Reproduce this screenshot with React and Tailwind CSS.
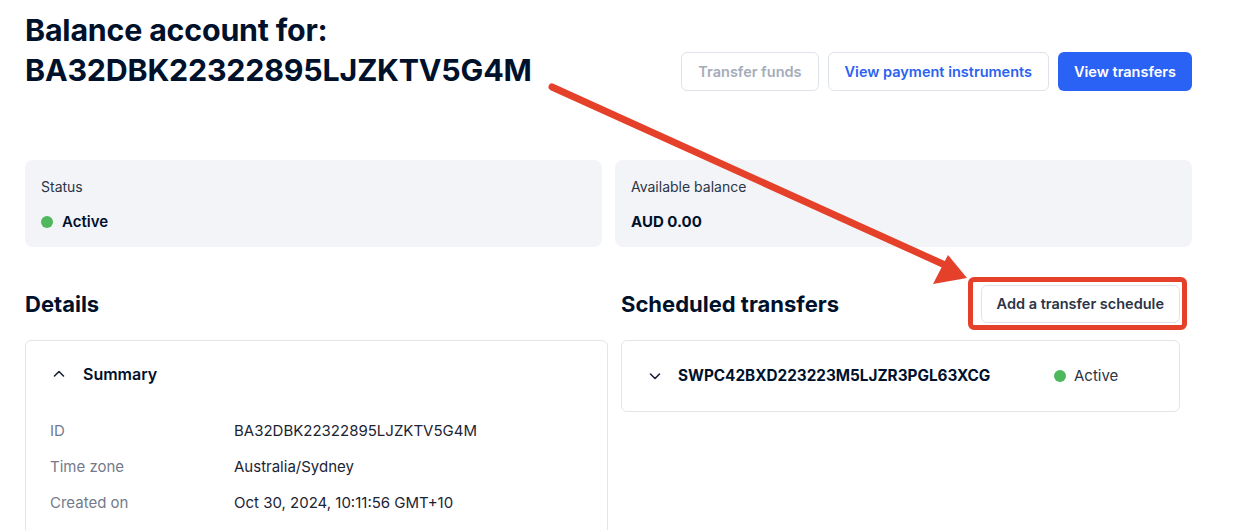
import React from 'react';

function Dot() {
  return <span className="inline-block w-3 h-3 rounded-full bg-[#4fb85c]" />;
}

function Chevron({ up }) {
  return (
    <svg className="w-4 h-4 text-[#1a2236]" viewBox="0 0 16 16" fill="none" stroke="currentColor" strokeWidth={1.6} strokeLinecap="round" strokeLinejoin="round">
      {up ? <path d="M3.5 10l4.5-4.5 4.5 4.5" /> : <path d="M3.5 6l4.5 4.5 4.5-4.5" />}
    </svg>
  );
}

export default function App() {
  const rows = [
    ['ID', 'BA32DBK22322895LJZKTV5G4M'],
    ['Time zone', 'Australia/Sydney'],
    ['Created on', 'Oct 30, 2024, 10:11:56 GMT+10'],
  ];

  return (
    <div className="relative w-[1244px] h-[530px] overflow-hidden bg-white font-['Inter',sans-serif] text-[#00112c]">
      <div className="pl-[25px] pr-[52px] pt-[10px]">
        {/* Header */}
        <div className="flex justify-between">
          <h1 className="text-[30.4px] leading-[40px] font-bold tracking-[-0.2px]">
            Balance account for:
            <br />
            BA32DBK22322895LJZKTV5G4M
          </h1>
          <div className="flex gap-[9px] mt-[42px] h-[39px]">
            <button className="px-4 rounded-md border border-[#dfe2e8] text-[14.5px] font-semibold text-[#a5acba]">Transfer funds</button>
            <button className="px-4 rounded-md border border-[#dfe2e8] text-[14.5px] font-semibold text-[#2b62f0]">View payment instruments</button>
            <button className="px-4 rounded-md bg-[#2b62f6] text-[14.5px] font-semibold text-white">View transfers</button>
          </div>
        </div>

        {/* Summary cards */}
        <div className="grid grid-cols-2 gap-[13px] mt-[69px]">
          <div className="h-[87px] rounded-lg bg-[#f3f4f8] px-4 pt-[16px]">
            <div className="text-[14px] text-[#2b3446]">Status</div>
            <div className="flex items-center gap-[9px] mt-[14px] text-[15px] font-semibold">
              <Dot />
              Active
            </div>
          </div>
          <div className="h-[87px] rounded-lg bg-[#f3f4f8] px-4 pt-[16px]">
            <div className="text-[14px] text-[#2b3446]">Available balance</div>
            <div className="mt-[14px] text-[15px] font-bold">AUD 0.00</div>
          </div>
        </div>

        {/* Lower section */}
        <div className="flex gap-[13px] mt-[38px]">
          <div className="w-[583px]">
            <h2 className="h-[38px] flex items-center text-[22px] font-bold">Details</h2>
            <div className="mt-[17px] border border-[#e3e5ea] rounded-md h-[200px]">
              <div className="flex items-center gap-[16px] pl-[25px] pt-[21px] text-[16px] font-semibold">
                <Chevron up />
                Summary
              </div>
              <div className="mt-[35px] pl-[24px] flex flex-col gap-[16px] text-[15px]">
                {rows.map(([k, v]) => (
                  <div key={k} className="flex h-[20px] items-center">
                    <span className="w-[184px] text-[#737b8b]">{k}</span>
                    <span className="text-[#1c2434]">{v}</span>
                  </div>
                ))}
              </div>
            </div>
          </div>
          <div className="flex-1">
            <div className="flex items-center justify-between h-[38px]">
              <h2 className="text-[22px] font-bold">Scheduled transfers</h2>
              <button className="relative h-[38px] px-[15px] mr-[12px] rounded-md border border-[#dfe2e8] text-[14.5px] font-semibold text-[#2b3446]">
                Add a transfer schedule
                <span className="absolute -left-[14px] -top-[9px] -right-[8px] -bottom-[8px] border-[5px] border-[#e5402a] rounded-[6px]" />
              </button>
            </div>
            <div className="mt-[17px] mr-[12px] border border-[#e3e5ea] rounded-md h-[72px] flex items-center pl-[25px]">
              <Chevron />
              <span className="ml-[15px] w-[376px] text-[15.3px] font-bold">SWPC42BXD223223M5LJZR3PGL63XCG</span>
              <Dot />
              <span className="ml-[8px] text-[15px] text-[#2b3446]">Active</span>
            </div>
          </div>
        </div>
      </div>

      {/* Annotation arrow */}
      <svg className="absolute left-0 top-0 pointer-events-none" width="1244" height="530" viewBox="0 0 1244 530">
        <line x1="552" y1="87" x2="945" y2="265" stroke="#e5402a" strokeWidth="7" strokeLinecap="round" />
        <polygon points="967,278 933,284 948,255" fill="#e5402a" />
      </svg>
    </div>
  );
}
